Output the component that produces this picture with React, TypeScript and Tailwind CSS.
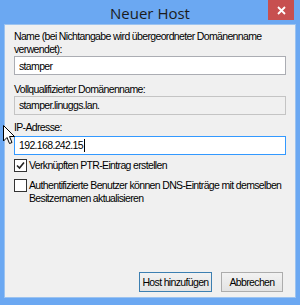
import { useState } from 'react';

const font = { fontFamily: '"Liberation Sans", Arial, sans-serif', letterSpacing: '-0.65px' };

function CheckBox({ checked }: { checked: boolean }) {
  return (
    <div className="w-[13px] h-[13px] shrink-0 border border-[#333] bg-white flex items-center justify-center">
      {checked && (
        <svg width="9" height="9" viewBox="0 0 9 9">
          <path d="M1 4.5 L3.5 7 L8 1.5" fill="none" stroke="#222" strokeWidth="1.6" />
        </svg>
      )}
    </div>
  );
}

export default function App() {
  const [name, setName] = useState('stamper');
  const [ip, setIp] = useState('192.168.242.15');

  return (
    <div className="relative w-[300px] h-[305px] bg-[#6ba8f2] flex flex-col text-black" style={font}>
      {/* Title bar */}
      <div className="h-[24px] shrink-0 flex items-center justify-center">
        <span className="text-[15px] text-[#1b1b1b] leading-none pt-[2px] tracking-normal" style={{ fontFamily: '"Open Sans", "Liberation Sans", sans-serif' }}>
          Neuer Host
        </span>
      </div>
      <div className="absolute right-[6px] top-0 w-[26px] h-[20px] bg-[#c75050] flex items-center justify-center">
        <svg width="9" height="9" viewBox="0 0 9 9">
          <path d="M1 1 L8 8 M8 1 L1 8" stroke="#fff" strokeWidth="1.8" />
        </svg>
      </div>

      {/* Client area */}
      <div className="mx-[4px] h-[274px] border border-[#9cc3f0] bg-[#f0f0f0] flex flex-col px-[9px] text-[10.5px] leading-[13px] whitespace-nowrap">
        <div className="pt-[5px]">
          Name (bei Nichtangabe wird übergeordneter Domänenname
          <br />
          verwendet):
        </div>
        <input
          value={name}
          onChange={(e) => setName(e.target.value)}
          className="h-[19px] border border-[#abadb3] bg-white px-[4px] text-[10.5px] outline-none"
          style={font}
        />

        <div className="mt-[8px]">Vollqualifizierter Domänenname:</div>
        <div className="h-[19px] border border-[#c4c4c4] bg-[#f0f0f0] px-[4px] flex items-center">
          stamper.linuggs.lan.
        </div>

        <div className="mt-[6px]">IP-Adresse:</div>
        <div className="mt-[2px] h-[19px] border border-[#3399ff] bg-white px-[4px] flex items-center">
          <span>{ip}</span>
          <span className="ml-px w-px h-[13px] bg-black" />
          <input value={ip} onChange={(e) => setIp(e.target.value)} className="hidden" />
        </div>

        <div className="mt-[4px] flex items-start gap-[2px]">
          <CheckBox checked />
          <span>Verknüpften PTR-Eintrag erstellen</span>
        </div>
        <div className="mt-[7px] flex items-start gap-[2px]">
          <CheckBox checked={false} />
          <span>
            Authentifizierte Benutzer können DNS-Einträge mit demselben
            <br />
            Besitzernamen aktualisieren
          </span>
        </div>

        <div className="mt-auto mb-[5px] flex justify-end gap-[9px] pr-[3px]">
          <button className="w-[73px] h-[20px] border border-[#3c7fb1] bg-gradient-to-b from-[#f2f2f2] to-[#e3e3e3] text-[10.5px] whitespace-nowrap" style={font}>
            Host hinzufügen
          </button>
          <button className="w-[62px] h-[20px] border border-[#acacac] bg-gradient-to-b from-[#f2f2f2] to-[#e3e3e3] text-[10.5px]" style={font}>
            Abbrechen
          </button>
        </div>
      </div>

      {/* mouse pointer */}
      <svg className="absolute left-[3px] top-[125px]" width="13" height="20" viewBox="0 0 13 20">
        <path d="M0.5 0.5 L0.5 16 L4 12.5 L6.5 18.5 L9 17.5 L6.5 11.5 L11.5 11.5 Z" fill="#fff" stroke="#000" strokeWidth="1" />
      </svg>
    </div>
  );
}
